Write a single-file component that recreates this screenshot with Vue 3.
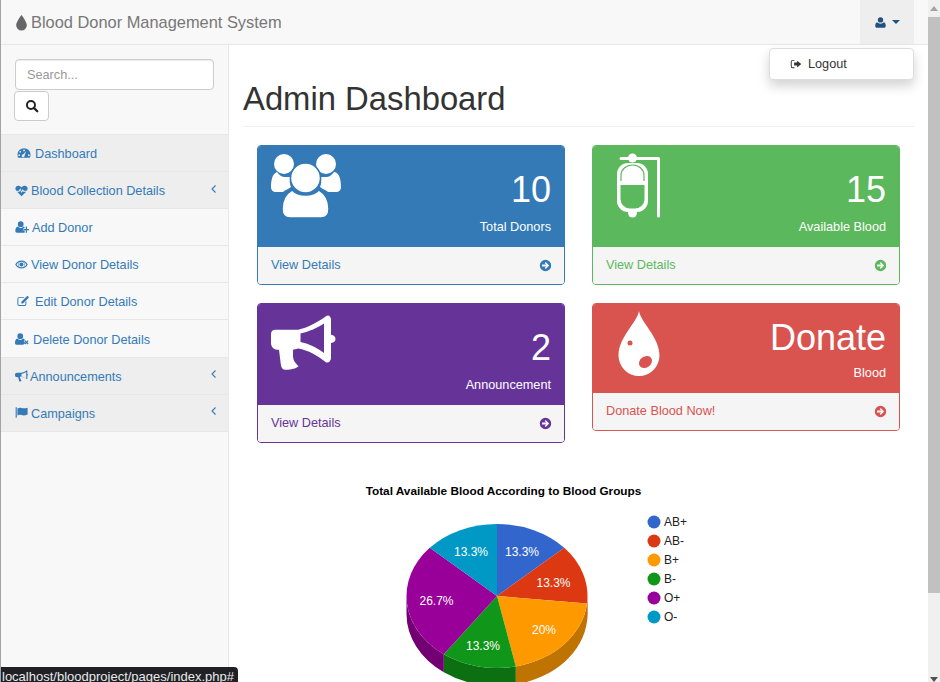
<template>
  <div class="page">
    <div class="site">
      <header class="navbar">
        <a class="brand" href="#">
          <svg class="brand-icon" viewBox="3 1 10 15"><path :d="icons.tint" /></svg>
          Blood Donor Management System
        </a>
        <button class="user-btn">
          <svg class="user-icon" viewBox="0 0 16 16"><path :d="icons.user" /></svg>
          <span class="caret"></span>
        </button>
        <div class="user-menu">
          <svg class="logout-icon" viewBox="0 0 16 16"><path :d="icons.signOut" fill-rule="evenodd" /></svg>
          Logout
        </div>
      </header>

      <div class="body-row">
        <aside class="sidebar">
          <div class="search">
            <input class="search-input" type="text" placeholder="Search..." />
            <button class="search-btn">
              <svg viewBox="0 0 16 16" class="search-icon">
                <circle cx="6.8" cy="6.8" r="4.6" fill="none" stroke="#222" stroke-width="2.2" />
                <path d="M10.2 10.2 14 14" stroke="#222" stroke-width="2.6" stroke-linecap="round" />
              </svg>
            </button>
          </div>
          <ul class="menu">
            <li v-for="item in menu" :key="item.label" :class="{ shaded: item.shaded }">
              <svg
                class="menu-icon"
                viewBox="0 0 16 16"
                :style="{ width: item.w + 'px', height: item.w + 'px', marginLeft: item.ml + 'px', marginRight: item.mr + 'px' }"
              >
                <path :d="icons[item.icon]" fill-rule="evenodd" />
              </svg>
              <span>{{ item.label }}</span>
              <svg v-if="item.arrow" class="angle" viewBox="0 0 8 10">
                <path d="M5.5 1.5 2 5l3.5 3.5" fill="none" stroke="#337ab7" stroke-width="1.1" />
              </svg>
            </li>
          </ul>
        </aside>

        <main class="content">
          <h1 class="title">Admin Dashboard</h1>
          <div class="cards">
            <div v-for="card in cards" :key="card.label" class="card" :class="card.cls">
              <div class="card-head">
                <svg class="card-icon" viewBox="0 0 70 70" v-html="card.art"></svg>
                <div class="card-right">
                  <div class="huge">{{ card.value }}</div>
                  <div class="card-label">{{ card.label }}</div>
                </div>
              </div>
              <a class="card-foot" href="#">
                <span>{{ card.link }}</span>
                <svg class="go" viewBox="0 0 16 16"><path :d="icons.go" fill-rule="evenodd" /></svg>
              </a>
            </div>
          </div>

          <svg class="chart" width="671" height="240" viewBox="243 470 671 240">
            <text x="503.5" y="495" class="chart-title" text-anchor="middle">Total Available Blood According to Blood Groups</text>
            <g v-for="s in slices" :key="s.name + 'side'">
              <path v-if="s.side" :d="s.side" :fill="s.dark" />
            </g>
            <path v-for="s in slices" :key="s.name" :d="s.top" :fill="s.color" />
            <text v-for="s in slices" :key="s.name + 'pct'" :x="s.lx" :y="s.ly" class="pct" text-anchor="middle">{{ s.pct }}</text>
            <g v-for="(s, i) in slices" :key="s.name + 'legend'">
              <circle cx="654" :cy="522 + i * 19" r="6.5" :fill="s.color" />
              <text x="664" :y="526 + i * 19" class="legend">{{ s.name }}</text>
            </g>
          </svg>
        </main>
      </div>
    </div>

    <div class="scrollbar">
      <span class="scroll-up"></span>
      <span class="scroll-thumb"></span>
      <span class="scroll-down"></span>
    </div>

    <div class="status">localhost/bloodproject/pages/index.php#</div>
  </div>
</template>

<script setup>
const icons = {
  tint: 'M8 1C8 1 3 7.4 3 10.6a5 5 0 0 0 10 0C13 7.4 8 1 8 1Z',
  user: 'M8 1.5a3.3 3.3 0 1 1 0 6.6 3.3 3.3 0 0 1 0-6.6ZM4.2 7.6C5 8.8 6.4 9.4 8 9.4s3-.6 3.8-1.8c1.6.3 2.7 1.8 2.7 4.4 0 1.5-.9 2.5-2.2 2.5H3.7c-1.3 0-2.2-1-2.2-2.5 0-2.6 1.1-4.1 2.7-4.4Z',
  signOut: 'M6 2.5H3.5A2.5 2.5 0 0 0 1 5v6a2.5 2.5 0 0 0 2.5 2.5H6v-1.3H3.5A1.2 1.2 0 0 1 2.3 11V5a1.2 1.2 0 0 1 1.2-1.2H6ZM9.5 3.5 15 8l-5.5 4.5V10h-4V6h4Z',
  dashboard: 'M8 2.5A7.5 7.5 0 0 1 15.5 10c0 1.4-.4 2.6-1 3.5h-13c-.6-.9-1-2.1-1-3.5A7.5 7.5 0 0 1 8 2.5ZM8 4a1 1 0 1 0 0 2 1 1 0 0 0 0-2ZM3.7 5.7a1 1 0 1 0 0 2 1 1 0 0 0 0-2ZM2.5 9.5a1 1 0 1 0 0 2 1 1 0 0 0 0-2ZM13.5 9.5a1 1 0 1 0 0 2 1 1 0 0 0 0-2ZM10.5 6 7.2 9.4a1.7 1.7 0 1 0 1.5 1.2Z',
  heartbeat: 'M8 15 2.6 9.6h2.9l1-1.9 1.7 3.5 1.4-2.5.5.9h3.7ZM1.6 8.4C.9 7.5.5 6.5.5 5.5.5 3.5 2 2 4 2c1.6 0 3 .8 4 2.2C9 2.8 10.4 2 12 2c2 0 3.5 1.5 3.5 3.5 0 1-.4 2-1.1 2.900h-3.600L9.600 6.200 8.200 8.800 6.500 5.200 4.800 8.400Z',
  userPlus: 'M6.5 1.500a3.300 3.300 0 1 1 0 6.600 3.300 3.300 0 0 1 0-6.600ZM3.300 7.500C4 8.500 5.100 9 6.500 9s2.500-.5 3.200-1.500c.5.1 1 .4 1.300.8v1.200H9.500v2.500h1.500V14.500H2.200C1.100 14.500 .4 13.700 .4 12.500c0-2.400.9-4.700 2.900-5ZM12.300 7.500h1.400v2.800H16v1.400h-2.300v2.800h-1.400v-2.800H10v-1.400h2.300Z',
  eye: 'M8 3c3.3 0 6 1.900 7.700 5C14 11.100 11.300 13 8 13s-6-1.900-7.700-5C2 4.900 4.700 3 8 3ZM8 4.500a3.500 3.500 0 1 0 0 7 3.500 3.500 0 0 0 0-7ZM1.900 8c1 1.500 2.100 2.500 3.300 3.100a4.800 4.800 0 0 1 0-6.200C4 5.500 2.900 6.500 1.900 8ZM14.100 8c-1-1.500-2.100-2.500-3.300-3.100a4.800 4.800 0 0 1 0 6.200c1.200-.6 2.300-1.600 3.300-3.100ZM8 5.500a2.500 2.500 0 1 1-.1 5A2.500 2.500 0 0 1 8 5.500Z',
  edit: 'M3 2.500h7L8.800 3.800H3A1.200 1.200 0 0 0 1.800 5v7A1.200 1.200 0 0 0 3 13.200h7a1.200 1.200 0 0 0 1.200-1.200V9.300l1.300-1.300V12a2.500 2.500 0 0 1-2.500 2.500H3A2.500 2.500 0 0 1 .5 12V5A2.500 2.500 0 0 1 3 2.500ZM12.500 2.300l2.200 2.200-6.700 6.700H5.800V9ZM13.200 1.600c.4-.4 1-.4 1.400 0l.8.8c.4.4.4 1 0 1.400l-.7.7-2.200-2.200Z',
  userX: 'M6 1.500a3.300 3.300 0 1 1 0 6.600 3.300 3.300 0 0 1 0-6.600ZM2.800 7.500C3.500 8.500 4.600 9 6 9s2.500-.5 3.200-1.500c1 .2 1.700.8 2.100 1.600L10 10.500l1.700 1.700-2.300 2.300H1.700C.6 14.500 0 13.700 0 12.500c0-2.400.8-4.700 2.800-5ZM11.700 9.400l1.400 1.400 1.400-1.400 1 1-1.400 1.400 1.400 1.400-1 1-1.400-1.400-1.400 1.400-1-1 1.400-1.400-1.400-1.400Z',
  bullhorn: 'M14.500 1.500c.4 0 .7.3.7.7v3.600c.5.3.8.7.8 1.200s-.3.9-.8 1.200v3.600c0 .4-.3.7-.7.7-2.200-1.700-4.700-2.900-7.500-3.200-.7.3-1.100 1-.8 1.800.2.5.6.9 1.100 1.200-.3.5-.3 1 0 1.400.3.4.6.7 1 .9-.5 1-2.700 1.200-3.300.2L3.900 10.300H2.500C1.100 10.300 0 9.200 0 7.800V7c0-1.400 1.100-2.500 2.500-2.500h4.300c2.900-.3 5.500-1.300 7.700-3ZM13.800 3.700c-1.800 1.200-3.800 2-5.800 2.500v3.300c2 .4 4 1.300 5.800 2.500Z',
  flag: 'M.8 1.500h1.400v13H.8ZM3 3c1.600-1 3.300-1.200 5-.6 2 .7 4.500.7 7.500-.4v8.500c-3 1.400-5.500 1.400-7.500.7-1.700-.6-3.400-.4-5 .6Z',
  go: 'M8 1a7 7 0 1 1 0 14A7 7 0 0 1 8 1ZM8.300 3.800 7 5.100l1.900 1.800H3.700v2.200h5.200L7 10.900l1.300 1.300L12.500 8Z',
}

const menu = [
  { label: 'Dashboard', icon: 'dashboard', shaded: true, w: 14, ml: 2, mr: 4 },
  { label: 'Blood Collection Details', icon: 'heartbeat', shaded: true, arrow: true, w: 13, ml: 0, mr: 3 },
  { label: 'Add Donor', icon: 'userPlus', w: 14, ml: 0, mr: 3 },
  { label: 'View Donor Details', icon: 'eye', w: 13, ml: 0, mr: 3 },
  { label: 'Edit Donor Details', icon: 'edit', w: 12, ml: 2, mr: 6 },
  { label: 'Delete Donor Details', icon: 'userX', w: 14, ml: 0, mr: 4 },
  { label: 'Announcements', icon: 'bullhorn', shaded: true, arrow: true, w: 13, ml: 0, mr: 2 },
  { label: 'Campaigns', icon: 'flag', shaded: true, arrow: true, w: 13, ml: 0, mr: 3 },
]

const usersArt = `
  <circle cx="13" cy="14" r="10" fill="#fff"/>
  <circle cx="55" cy="14" r="10" fill="#fff"/>
  <path fill="#fff" d="M6 22c2 3 5 5 8 5h5c-.5 3-.5 7 1 10l-3 2c-2 1-4 2-5 3H5c-3 0-5-2-5-5 0-6 1-13 6-15Z"/>
  <path fill="#fff" d="M63 22c-2 3-5 5-8 5h-5c.5 3 .5 7-1 10l3 2c2 1 4 2 5 3h8c3 0 5-2 5-5 0-6-1-13-6-15Z"/>
  <circle cx="34.5" cy="28" r="15" fill="#fff" stroke="#337ab7" stroke-width="1.5"/>
  <path fill="#fff" stroke="#337ab7" stroke-width="1.5" d="M21 40c3 3 8 5 13.5 5s10.5-2 13.5-5c7 4 10 12 10 19 0 6-3 9-8 9H19c-5 0-8-3-8-9 0-7 3-15 10-19Z"/>`

const bagArt = `
  <path fill="none" stroke="#fff" stroke-width="3" stroke-linecap="round" stroke-linejoin="round" d="M15 8.5H52.500V66"/>
  <circle cx="26.5" cy="8" r="4.500" fill="#fff"/>
  <circle cx="26.5" cy="63" r="4.500" fill="#fff"/>
  <rect x="11" y="13" width="31" height="49" rx="11" fill="#fff"/>
  <path fill="#5cb85c" d="M14.500 35h24v14a9.500 9.500 0 0 1-9.500 9.500h-5a9.500 9.500 0 0 1-9.500-9.500Z"/>
  <path fill="none" stroke="#5cb85c" stroke-width="1.2" d="M15 31v-6a11.500 10 0 0 1 23 0v6"/>`

const hornArt = `
  <path fill="#fff" fill-rule="evenodd" d="M4 21.700h23.300C36 20 47 14 55 8.300c2.500-1.800 5 .2 5 3.400v15c3 .3 4.500 2.300 4.500 4.300S63 34.700 60 35v15c0 3.500-3 5.500-5.500 4-7.500-6-17.500-12-27.200-13.500L22 41.700V48c0 4 2 7 5.500 10.300-2.500 2.700-9.500 3.700-13.500 3.400-3.500-.2-4-3.700-4.500-7.700L8 41.700H6c-4 0-6-3.700-6-6.700v-9.300c0-2.700 2-4 4-4ZM29.500 25.500V34c7.500 1.500 16.500 5.500 23.500 11V15.500c-7 4.500-16 8.500-23.500 10Z"/>`

const dropArt = `
  <path fill="#fff" d="M33 3c1.500 11 20.500 26 20.500 44.500a20.500 20.500 0 0 1-41 0C12.500 29 31.500 14 33 3Z"/>
  <ellipse cx="24" cy="35" rx="2.500" ry="2.500" fill="#d9534f"/>
  <ellipse cx="39.500" cy="54" rx="7" ry="5.500" fill="#d9534f" transform="rotate(-35 39.500 54)"/>`

const cards = [
  { label: 'Total Donors', value: '10', link: 'View Details', cls: 'blue', art: usersArt },
  { label: 'Available Blood', value: '15', link: 'View Details', cls: 'green', art: bagArt },
  { label: 'Announcement', value: '2', link: 'View Details', cls: 'purple', art: hornArt },
  { label: 'Blood', value: 'Donate', link: 'Donate Blood Now!', cls: 'red', art: dropArt },
]

// pie centre and radii as measured, depth is the height of the rim
const cx = 497
const cy = 596
const rx = 90.5
const ry = 72
const depth = 18

const point = (deg, dy = 0) => {
  const a = (deg * Math.PI) / 180
  return `${(cx + rx * Math.sin(a)).toFixed(2)} ${(cy - ry * Math.cos(a) + dy).toFixed(2)}`
}

const groups = [
  { name: 'AB+', pct: '13.3%', from: 0, to: 48, color: '#3366cc', dark: '#264c99', lx: 522, ly: 556 },
  { name: 'AB-', pct: '13.3%', from: 48, to: 96, color: '#dc3912', dark: '#a52b0e', lx: 553.5, ly: 586.5 },
  { name: 'B+', pct: '20%', from: 96, to: 168, color: '#ff9900', dark: '#bf7300', lx: 544, ly: 634 },
  { name: 'B-', pct: '13.3%', from: 168, to: 216, color: '#109618', dark: '#0c7012', lx: 483, ly: 650 },
  { name: 'O+', pct: '26.7%', from: 216, to: 312, color: '#990099', dark: '#730073', lx: 436.5, ly: 605 },
  { name: 'O-', pct: '13.3%', from: 312, to: 360, color: '#0099c6', dark: '#007394', lx: 471, ly: 556 },
]

const slices = groups.map((g) => {
  const top = `M${cx} ${cy} L${point(g.from)} A${rx} ${ry} 0 0 1 ${point(g.to)} Z`
  // only the part of the rim that faces the viewer gets drawn
  const a = Math.max(g.from, 90)
  const b = Math.min(g.to, 270)
  const side = a < b
    ? `M${point(a)} A${rx} ${ry} 0 0 1 ${point(b)} L${point(b, depth)} A${rx} ${ry} 0 0 0 ${point(a, depth)} Z`
    : null
  return { ...g, top, side }
})
</script>

<style>
html,
body {
  margin: 0;
  height: 682px;
  overflow: hidden;
  background: #fff;
}
</style>

<style scoped>
.page {
  height: 682px;
  position: relative;
  overflow: hidden;
  font-family: "Liberation Sans", Arial, sans-serif;
  font-size: 12.7px;
  color: #333;
  display: flex;
  box-sizing: border-box;
  border-left: 1px solid #a3a3a3;
}

.site {
  flex: 1;
  min-width: 0;
  display: flex;
  flex-direction: column;
}

.navbar {
  height: 44px;
  flex: none;
  background: #f8f8f8;
  border-bottom: 1px solid #e7e7e7;
  display: flex;
  justify-content: space-between;
  padding-right: 14px;
  position: relative;
}

.brand {
  display: flex;
  align-items: center;
  gap: 4px;
  padding-left: 15px;
  font-size: 16.4px;
  color: #777;
  text-decoration: none;
}

.brand-icon {
  width: 11px;
  height: 16px;
  fill: #666;
  margin-top: 1px;
}

.user-btn {
  width: 54px;
  border: 0;
  padding: 0;
  background: #eee;
  display: flex;
  align-items: center;
  justify-content: center;
  gap: 3px;
}

.user-icon {
  width: 13px;
  height: 13px;
  fill: #23527c;
}

.caret {
  width: 0;
  height: 0;
  border-left: 4px solid transparent;
  border-right: 4px solid transparent;
  border-top: 4px solid #23527c;
  margin-left: 2px;
}

.user-menu {
  position: absolute;
  top: 48px;
  right: 14px;
  width: 145px;
  height: 32px;
  display: flex;
  align-items: center;
  box-sizing: border-box;
  padding-left: 20px;
  padding-bottom: 1px;
  background: #fff;
  border: 1px solid #ddd;
  border-radius: 4px;
  box-shadow: 0 6px 12px rgba(0, 0, 0, 0.175);
  color: #333;
  z-index: 5;
}

.logout-icon {
  width: 12px;
  height: 12px;
  fill: #333;
  margin-right: 6px;
}

.body-row {
  flex: 1;
  min-height: 0;
  display: flex;
}

.sidebar {
  width: 227px;
  flex: none;
  background: #f8f8f8;
  border-right: 1px solid #e7e7e7;
}

.search {
  padding: 14px 13px 13px 13px;
  height: 62px;
}

.search-input {
  display: block;
  width: 199px;
  height: 31px;
  margin-left: 1px;
  box-sizing: border-box;
  padding: 6px 11px;
  background: #fff;
  border: 1px solid #ccc;
  border-radius: 4px;
  font: 12.7px "Liberation Sans", Arial, sans-serif;
  color: #555;
  box-shadow: inset 0 1px 1px rgba(0, 0, 0, 0.075);
}

.search-input::placeholder {
  color: #999;
}

.search-btn {
  display: flex;
  align-items: center;
  justify-content: center;
  width: 35px;
  height: 30px;
  margin-top: 1px;
  padding: 0;
  background: #fff;
  border: 1px solid #ccc;
  border-radius: 4px;
}

.search-icon {
  width: 14px;
  height: 14px;
}

.menu {
  list-style: none;
  margin: 0;
  padding: 0;
  border-top: 1px solid #e7e7e7;
}

.menu li {
  height: 36.1px;
  box-sizing: content-box;
  display: flex;
  align-items: center;
  padding-left: 14px;
  padding-right: 10px;
  border-bottom: 1px solid #e7e7e7;
  color: #337ab7;
}

.menu li span {
  position: relative;
  top: 1px;
}

.menu li.shaded {
  background: #eee;
}

.menu-icon {
  fill: #337ab7;
  flex: none;
}

.angle {
  width: 8px;
  height: 10px;
  margin-left: auto;
  margin-top: -3px;
}

.content {
  flex: 1;
  min-width: 0;
  padding: 0 14px;
  background: #fff;
}

.title {
  margin: 36px 0 18px;
  padding-bottom: 9px;
  border-bottom: 1px solid #eee;
  font-size: 32.8px;
  font-weight: 500;
  line-height: 36px;
  color: #333;
}

.cards {
  display: grid;
  grid-template-columns: 308px 308px;
  column-gap: 27px;
  row-gap: 18px;
  align-items: start;
  padding-left: 14px;
}

.card {
  border: 1px solid;
  border-radius: 4px;
  overflow: hidden;
  background: #fff;
}

.card-head {
  height: 101px;
  box-sizing: border-box;
  display: flex;
  justify-content: space-between;
  padding: 24px 13px 0 13px;
  color: #fff;
  position: relative;
}

.card-icon {
  position: absolute;
  left: 13px;
  top: 4px;
  width: 70px;
  height: 70px;
}

.card-right {
  margin-left: auto;
  text-align: right;
}

.huge {
  font-size: 36px;
  line-height: 40px;
  margin-bottom: 7px;
}

.card-label {
  line-height: 20px;
}

.card-foot {
  height: 37px;
  box-sizing: border-box;
  display: flex;
  align-items: center;
  justify-content: space-between;
  padding: 0 12px 1px 13px;
  background: #f5f5f5;
  text-decoration: none;
}

.go {
  width: 13px;
  height: 13px;
}

.blue { border-color: #337ab7; }
.blue .card-head { background: #337ab7; }
.blue .card-foot { color: #337ab7; fill: #337ab7; }

.green { border-color: #5cb85c; }
.green .card-head { background: #5cb85c; }
.green .card-foot { color: #5cb85c; fill: #5cb85c; }

.purple { border-color: #663399; }
.purple .card-head { background: #663399; }
.purple .card-foot { color: #663399; fill: #663399; }

.red { border-color: #d9534f; }
.red .card-head { background: #d9534f; height: 89px; padding-top: 14px; }
.red .huge { margin-bottom: 5px; }
.red .card-foot { color: #d9534f; fill: #d9534f; }

.chart {
  display: block;
  margin-top: 27px;
}

.chart-title {
  font: bold 11.8px "Liberation Sans", Arial, sans-serif;
  fill: #000;
}

.pct {
  font: 12px "Liberation Sans", Arial, sans-serif;
  fill: #fff;
}

.legend {
  font: 12px "Liberation Sans", Arial, sans-serif;
  fill: #222;
}

.scrollbar {
  width: 12px;
  flex: none;
  background: #f0f0f0;
  position: relative;
}

.scroll-up {
  position: absolute;
  left: 2px;
  top: 6px;
  width: 0;
  height: 0;
  border-left: 4px solid transparent;
  border-right: 4px solid transparent;
  border-bottom: 5px solid #a3a3a3;
}

.scroll-thumb {
  position: absolute;
  left: 0;
  right: 0;
  top: 17px;
  height: 576px;
  background: #c1c1c1;
}

.scroll-down {
  position: absolute;
  left: 2px;
  bottom: 0;
  width: 0;
  height: 0;
  border-left: 4px solid transparent;
  border-right: 4px solid transparent;
  border-top: 5px solid #505050;
}

.status {
  position: absolute;
  left: -1px;
  bottom: 0;
  width: 238px;
  height: 15px;
  box-sizing: border-box;
  padding-left: 2px;
  background: #202124;
  border-top-right-radius: 4px;
  color: #e8eaed;
  font-size: 13px;
  line-height: 20px;
  white-space: nowrap;
  overflow: hidden;
  z-index: 6;
}
</style>
